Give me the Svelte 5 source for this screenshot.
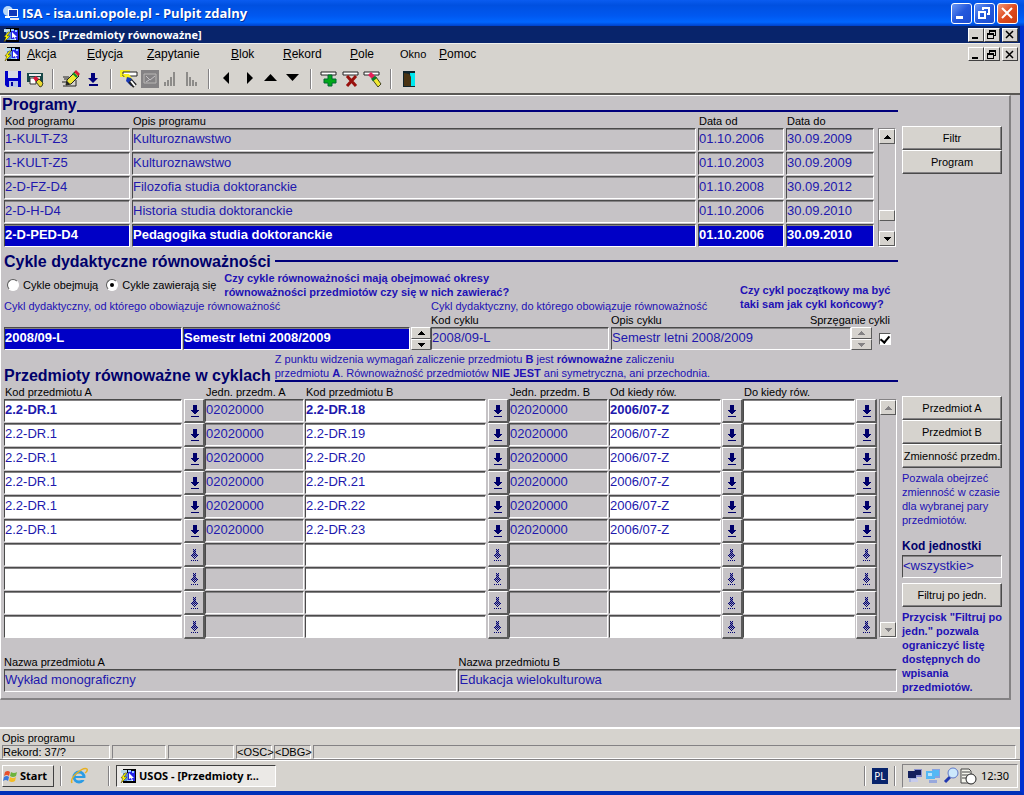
<script lang="ts">
	interface Program {
		code: string;
		name: string;
		from: string;
		to: string;
	}

	interface Pair {
		a: string;
		unitA: string;
		b: string;
		unitB: string;
		from: string;
		to: string;
	}

	const menu = [
		{ key: 'A', rest: 'kcja' },
		{ key: 'E', rest: 'dycja' },
		{ key: 'Z', rest: 'apytanie' },
		{ key: 'B', rest: 'lok' },
		{ key: 'R', rest: 'ekord' },
		{ key: 'P', rest: 'ole' },
		{ key: '', rest: 'Okno' },
		{ key: 'P', rest: 'omoc' }
	];

	const tools = [
		['save', 'print'],
		['edit', 'list'],
		['query', 'run', 'asc', 'desc'],
		['left', 'right', 'up', 'down'],
		['add', 'remove', 'clear'],
		['exit']
	];

	const programs: Program[] = [
		{ code: '1-KULT-Z3', name: 'Kulturoznawstwo', from: '01.10.2006', to: '30.09.2009' },
		{ code: '1-KULT-Z5', name: 'Kulturoznawstwo', from: '01.10.2003', to: '30.09.2009' },
		{ code: '2-D-FZ-D4', name: 'Filozofia studia doktoranckie', from: '01.10.2008', to: '30.09.2012' },
		{ code: '2-D-H-D4', name: 'Historia studia doktoranckie', from: '01.10.2006', to: '30.09.2010' },
		{ code: '2-D-PED-D4', name: 'Pedagogika studia doktoranckie', from: '01.10.2006', to: '30.09.2010' }
	];

	const emptyPair = { a: '', unitA: '', b: '', unitB: '', from: '', to: '' };

	const pairs: Pair[] = [
		...[18, 19, 20, 21, 22, 23].map((n) => ({
			a: '2.2-DR.1',
			unitA: '02020000',
			b: '2.2-DR.' + n,
			unitB: '02020000',
			from: '2006/07-Z',
			to: ''
		})),
		...[1, 2, 3, 4].map(() => ({ ...emptyPair }))
	];

	let currentProgram = $state(4);
	let currentPair = $state(0);
	let range = $state('inside');
	let linked = $state(true);
	let unit = $state('<wszystkie>');
</script>

{#snippet usosIcon()}
	<svg class="app-icon" width="16" height="16" viewBox="0 0 16 16" aria-hidden="true">
		<path d="M3 1h13v14H3z" fill="#000" />
		<path d="M1 2h6v3H1z" fill="#b8d8e8" />
		<path d="M8 3h7v10H8z" fill="#2424e8" />
		<path d="M3 5h5v8H3z" fill="#5a8cd8" />
		<path d="M8 2h3v2H8zM12 3h2v2h-2zM7 12h6v1H7z" fill="#9cf" />
		<path d="M9 5l5 5h-2l1 3h-1l-1-3-2 1z" fill="#fff" />
		<path d="M5 5L1 10h2l-2 5 6-6H4l3-4z" fill="#ff0" stroke="#430" stroke-width=".5" />
	</svg>
{/snippet}

{#snippet lovArrow(off)}
	<svg width="9" height="12" viewBox="0 0 9 12" shape-rendering="crispEdges" aria-hidden="true">
		{#if off}
			<path
				d="M3 0h1v1H3zM5 0h1v1H5zM4 1h1v1H4zM3 2h1v1H3zM5 2h1v1H5zM4 3h1v1H4zM3 4h1v1H3zM5 4h1v1H5zM2 5h1v1H2zM4 5h1v1H4zM6 5h1v1H6zM1 6h1v1H1zM3 6h1v1H3zM5 6h1v1H5zM7 6h1v1H7zM2 7h1v1H2zM4 7h1v1H4zM6 7h1v1H6zM3 8h1v1H3zM5 8h1v1H5zM4 9h1v1H4zM1 11h1v1H1zM3 11h1v1H3zM5 11h1v1H5zM7 11h1v1H7z"
				fill="#000073"
			/>
			<path d="M3 1h3v6H3zM2 6h5v1H2z" fill="#000073" opacity=".35" />
		{:else}
			<path d="M3 0h4v5h2v1H8v1H7v1H6v1H5v1H5V9H4V8H3V7H2V6H1V5h2zM1 11h8v1H1z" fill="#00006b" />
		{/if}
	</svg>
{/snippet}

{#snippet triangle(up)}
	<svg width="7" height="4" viewBox="0 0 7 4" shape-rendering="crispEdges" aria-hidden="true">
		<path d={up ? 'M3 0h1v1h1v1h1v1h1v1H0V3h1V2h1V1h1z' : 'M0 0h7v1H6v1H5v1H4v1H3V3H2V2H1V1H0z'} fill="currentColor" />
	</svg>
{/snippet}

{#snippet toolIcon(name)}
	<svg width="20" height="20" viewBox="0 0 20 20" aria-hidden="true">
		{#if name === 'save'}
			<path d="M2 2h16v16H4l-2-2z" fill="#0000c8" />
			<path d="M5 2h10v7H5z" fill="#d8dce8" />
			<path d="M6 12h9v6H6z" fill="#b8c4e8" />
			<path d="M8 13h2v4H8z" fill="#0000a0" />
		{:else if name === 'print'}
			<path d="M2 4h16v9h-3V8H5v5H2z" fill="#184848" />
			<path d="M4 5h12v2H4z" fill="#eee" />
			<path d="M5 9h6v6H5z" fill="#fff" stroke="#333" />
			<path d="M8 9l3-2 3 3-3 3z" fill="#d81838" />
			<path d="M11 13l3-3 4 4-1 3-2 1z" fill="#e8d830" stroke="#442" />
		{:else if name === 'edit'}
			<path d="M2 8h6M1 13h5M3 10h4M2 17h13v-6" stroke="#222" fill="none" />
			<path d="M5 16l1-5 8-8 4 4-8 8z" fill="#f0e830" stroke="#222" />
			<path d="M5 16l1-4 3 3z" fill="#222" />
			<path d="M13 3l2-2 4 4-2 2z" fill="#d81838" />
			<path d="M12 4l4 4" stroke="#0a8a2a" stroke-width="2" />
		{:else if name === 'list'}
			<path d="M8 4h4v5h3l-5 5-5-5h3zM6 15h9v2H6z" fill="#00007b" />
		{:else if name === 'query'}
			<path d="M1 1h10v7H1z" fill="#f8f020" />
			<path d="M4 3h14v4H4z" fill="#fff" stroke="#222" />
			<path d="M3 5h7l4 6-4 2-3-4z" fill="#f8f020" />
			<path d="M8 8l4 1 4 5-4 3-5-5z" fill="#1838b8" />
			<path d="M11 12l5 5" stroke="#222" stroke-width="5" />
			<path d="M12 12l4 5" stroke="#fff" stroke-width="2" />
		{:else if name === 'run'}
			<path d="M1 1h18v18H1z" fill="#848284" />
			<path d="M4 5h12v9H4z" fill="none" stroke="#b8b6b4" />
			<path d="M6 7l4 4 5-4M6 13l3-2" fill="none" stroke="#c6c3c6" />
		{:else if name === 'asc'}
			<path d="M4 13v4M7 11v6M10 8v9M13 3v14" stroke="#444" />
		{:else if name === 'desc'}
			<path d="M5 3v14M8 8v9M11 11v6M14 13v4" stroke="#444" />
		{:else if name === 'left'}
			<path d="M12 3v12L6 9z" fill="#000" />
		{:else if name === 'right'}
			<path d="M8 3v12l6-6z" fill="#000" />
		{:else if name === 'up'}
			<path d="M3 12h13L9.500 5z" fill="#000" />
		{:else if name === 'down'}
			<path d="M3 5h13l-6.500 7z" fill="#000" />
		{:else if name === 'add'}
			<path d="M2 3h15v3H2z" fill="#fff" stroke="#222" />
			<path d="M9 6h4v4h4v4h-4v3H9v-3H5v-4h4z" fill="#00a818" stroke="#063" />
		{:else if name === 'remove'}
			<path d="M2 3h15v3H2z" fill="#fff" stroke="#222" />
			<path d="M6 7l9 10M15 7L6 17" stroke="#98100c" stroke-width="3" />
		{:else if name === 'clear'}
			<path d="M1 3h15v3H1z" fill="#fff" stroke="#222" />
			<path d="M9 10l4-2 5 7-3 3z" fill="#f0e830" stroke="#442" />
			<path d="M5 6l3-3 4 4-3 3z" fill="#e82058" />
			<path d="M9 11l4-3" stroke="#0a7a2a" stroke-width="3" />
		{:else if name === 'exit'}
			<path d="M4 2h12v16H4z" fill="#10242c" />
			<path d="M11 4h5v13h-4z" fill="#00e8f0" />
			<path d="M5 4l5 1 2 3v9H5z" fill="#4a3414" />
		{/if}
	</svg>
{/snippet}

{#snippet windowButtons()}
	<div class="win-buttons">
		<button aria-label="_">
			<svg width="13" height="11" viewBox="0 0 13 11"><path d="M3 8h6v2H3z" /></svg>
		</button>
		<button aria-label="❐">
			<svg width="13" height="11" viewBox="0 0 13 11">
				<path d="M4 1h7v6H9V6h1V3H5v1H4zM2 4h7v6H2zM3 6v3h5V6z" fill-rule="evenodd" />
			</svg>
		</button>
		<button aria-label="×">
			<svg width="13" height="11" viewBox="0 0 13 11">
				<path d="M3 2l7 7M10 2L3 9" stroke="#000" stroke-width="1.500" />
			</svg>
		</button>
	</div>
{/snippet}

{#snippet scrollbar(off, thumb)}
	<div class="scrollbar" class:off>
		<button aria-label="▲" disabled={off}>{@render triangle(true)}</button>
		<div class="track">
			{#if thumb}<span class="thumb"></span>{/if}
		</div>
		<button aria-label="▼" disabled={off}>{@render triangle(false)}</button>
	</div>
{/snippet}

{#snippet spinner(off)}
	<div class="spinner" class:off>
		<button aria-label="▲" disabled={off}>{@render triangle(true)}</button>
		<button aria-label="▼" disabled={off}>{@render triangle(false)}</button>
	</div>
{/snippet}

<div class="window">
	<header class="remote-bar">
		<svg width="18" height="18" viewBox="0 0 18 18" aria-hidden="true">
			<circle cx="6" cy="7" r="5" fill="#b8d8f8" />
			<path d="M6 5h10v8H6z" fill="#fff" />
			<path d="M7 6h8v6H7z" fill="#1038b8" />
			<path d="M8 14h9v2H8z" fill="#e8ecf4" />
			<path d="M3 12h5v2H3z" fill="#fff" />
		</svg>
		<h1>ISA - isa.uni.opole.pl - Pulpit zdalny</h1>
		<div class="xp-buttons">
			<button aria-label="_">
				<svg width="18" height="18" viewBox="0 0 18 18"><path d="M4 12h7v3H4z" fill="#fff" /></svg>
			</button>
			<button aria-label="❐">
				<svg width="18" height="18" viewBox="0 0 18 18">
					<path d="M7 3h8v8h-3V9h1V5H9v1H7zM3 7h8v8H3zM5 9v4h4V9z" fill="#fff" fill-rule="evenodd" />
				</svg>
			</button>
			<button class="close" aria-label="×">
				<svg width="18" height="18" viewBox="0 0 18 18">
					<path d="M4 4l10 10M14 4L4 14" stroke="#fff" stroke-width="2" />
				</svg>
			</button>
		</div>
	</header>

	<div class="app-bar">
		{@render usosIcon()}
		<h2>USOS - [Przedmioty równoważne]</h2>
		{@render windowButtons()}
	</div>

	<nav class="menu-bar">
		{@render usosIcon()}
		<div class="menu">
			{#each menu as item}
				<button class:small={!item.key}><u>{item.key}</u>{item.rest}</button>
			{/each}
		</div>
		{@render windowButtons()}
	</nav>

	<div class="toolbar">
		{#each tools as group, i}
			{#if i > 0}<span class="separator"></span>{/if}
			<div class="tool-group" class:tight={i === 2}>
				{#each group as name}
					<button aria-label={name}>{@render toolIcon(name)}</button>
				{/each}
			</div>
		{/each}
	</div>

	<main class="workspace">
		<div class="panel">
			<section class="programs">
				<div class="heading">
					<h3>Programy</h3>
					<span class="rule"></span>
				</div>
				<div class="with-scroll">
					<table>
						<colgroup>
							<col class="w128" /><col /><col class="w88" /><col class="w90" />
						</colgroup>
						<thead>
							<tr>
								<th id="p-code">Kod programu</th>
								<th id="p-name">Opis programu</th>
								<th id="p-from">Data od</th>
								<th id="p-to">Data do</th>
							</tr>
						</thead>
						<tbody>
							{#each programs as program, i}
								<tr class:selected={i === currentProgram} onfocusin={() => (currentProgram = i)}>
									<td><input class="field" aria-labelledby="p-code" readonly value={program.code} /></td>
									<td><input class="field" aria-labelledby="p-name" readonly value={program.name} /></td>
									<td><input class="field" aria-labelledby="p-from" readonly value={program.from} /></td>
									<td><input class="field" aria-labelledby="p-to" readonly value={program.to} /></td>
								</tr>
							{/each}
						</tbody>
					</table>
					{@render scrollbar(false, true)}
				</div>
			</section>
			<aside class="side-programs">
				<button class="push">Filtr</button>
				<button class="push">Program</button>
			</aside>

			<section class="cycles">
				<div class="heading middle">
					<h3>Cykle dydaktyczne równoważności</h3>
					<span class="rule"></span>
				</div>
				<div class="cycle-grid">
					<div class="options">
						<label><input type="radio" value="cover" bind:group={range} />Cykle obejmują</label>
						<label><input type="radio" value="inside" bind:group={range} />Cykle zawierają się</label>
						<p class="hint strong">
							Czy cykle równoważności mają obejmować okresy<br />
							równoważności przedmiotów czy się w nich zawierać?
						</p>
					</div>
					<p class="hint strong link-hint">Czy cykl początkowy ma być<br />taki sam jak cykl końcowy?</p>
					<p class="hint" id="cycle-from">Cykl dydaktyczny, od którego obowiązuje równoważność</p>
					<p class="hint" id="cycle-to">Cykl dydaktyczny, do którego obowiązuje równoważność</p>
					<div class="cycle-start selected">
						<input class="field" aria-labelledby="cycle-from" readonly value="2008/09-L" />
						<input class="field" aria-labelledby="cycle-from" readonly value="Semestr letni 2008/2009" />
						{@render spinner(false)}
					</div>
					<div class="cycle-end">
						<label for="end-code">Kod cyklu</label>
						<label for="end-name" class="col-name">Opis cyklu</label>
						<label for="linked" class="col-link">Sprzęganie cykli</label>
						<input id="end-code" class="field" readonly value="2008/09-L" />
						<input id="end-name" class="field" readonly value="Semestr letni 2008/2009" />
						{@render spinner(true)}
						<input id="linked" type="checkbox" bind:checked={linked} />
					</div>
				</div>
			</section>

			<section class="pairs">
				<div class="pairs-head">
					<h3>Przedmioty równoważne w cyklach</h3>
					<div>
						<p class="hint">
							Z punktu widzenia wymagań zaliczenie przedmiotu <b>B</b> jest <b>równoważne</b> zaliczeniu<br />
							przedmiotu <b>A</b>. Równoważność przedmiotów <b>NIE JEST</b> ani symetryczna, ani przechodnia.
						</p>
						<span class="rule"></span>
					</div>
				</div>
				<div class="with-scroll">
					<table>
						<colgroup>
							<col class="w180" /><col class="w21" /><col class="w100" />
							<col /><col class="w21" /><col class="w100" />
							<col class="w113" /><col class="w21" /><col class="w113" /><col class="w21" />
						</colgroup>
						<thead>
							<tr>
								<th id="a" colspan="2">Kod przedmiotu A</th>
								<th id="unit-a">Jedn. przedm. A</th>
								<th id="b" colspan="2">Kod przedmiotu B</th>
								<th id="unit-b">Jedn. przedm. B</th>
								<th id="from" colspan="2">Od kiedy rów.</th>
								<th id="to" colspan="2">Do kiedy rów.</th>
							</tr>
						</thead>
						<tbody>
							{#each pairs as pair, i}
								{@const off = !pair.a}
								<tr class:current={i === currentPair} onfocusin={() => (currentPair = i)}>
									<td><input class="field edit" aria-labelledby="a" value={pair.a} /></td>
									<td class="flush"><button class="lov" aria-labelledby="a" disabled={off}>{@render lovArrow(off)}</button></td>
									<td class="tight"><input class="field" aria-labelledby="unit-a" readonly value={pair.unitA} /></td>
									<td><input class="field edit" aria-labelledby="b" value={pair.b} /></td>
									<td class="flush"><button class="lov" aria-labelledby="b" disabled={off}>{@render lovArrow(off)}</button></td>
									<td class="tight"><input class="field" aria-labelledby="unit-b" readonly value={pair.unitB} /></td>
									<td class="tight"><input class="field edit" aria-labelledby="from" value={pair.from} /></td>
									<td class="flush"><button class="lov" aria-labelledby="from" disabled={off}>{@render lovArrow(off)}</button></td>
									<td class="tight"><input class="field edit" aria-labelledby="to" value={pair.to} /></td>
									<td class="flush"><button class="lov" aria-labelledby="to" disabled={off}>{@render lovArrow(off)}</button></td>
								</tr>
							{/each}
						</tbody>
					</table>
					{@render scrollbar(true, false)}
				</div>
				<div class="names">
					<label>Nazwa przedmiotu A<input class="field" readonly value="Wykład monograficzny" /></label>
					<label>Nazwa przedmiotu B<input class="field" readonly value="Edukacja wielokulturowa" /></label>
				</div>
			</section>
			<aside class="side-pairs">
				<button class="push">Przedmiot A</button>
				<button class="push">Przedmiot B</button>
				<button class="push">Zmienność przedm.</button>
				<p class="hint">Pozwala obejrzeć<br />zmienność w czasie<br />dla wybranej pary<br />przedmiotów.</p>
				<label class="unit">Kod jednostki<input class="field" bind:value={unit} /></label>
				<button class="push">Filtruj po jedn.</button>
				<p class="hint strong">
					Przycisk "Filtruj po<br />jedn." pozwala<br />ograniczyć listę<br />dostępnych do<br />wpisania<br />przedmiotów.
				</p>
			</aside>
		</div>
	</main>

	<div class="status">
		<div>Opis programu</div>
		<div class="status-cells">
			<span>Rekord: 37/?</span>
			<span></span>
			<span></span>
			<span>&lt;OSC&gt;</span>
			<span>&lt;DBG&gt;</span>
			<span></span>
		</div>
	</div>

	<footer class="taskbar">
		<button class="start">
			<svg width="16" height="15" viewBox="0 0 16 15" aria-hidden="true">
				<path d="M2 3q3-2 5 0L6 7Q4 5 1 7z" fill="#e8502c" />
				<path d="M8 3q3 2 6 0l-1 4q-3 2-6 0z" fill="#6cb43c" />
				<path d="M1 8q3-2 5 0l-1 4q-2-2-5 0z" fill="#3c78dc" />
				<path d="M7 8q3 2 6 0l-1 4q-3 2-6 0z" fill="#f4bc24" />
			</svg>
			Start
		</button>
		<span class="grip"></span>
		<a class="ie" href="#ie" aria-label="e">
			<svg width="18" height="18" viewBox="0 0 18 18">
				<circle cx="9" cy="10" r="5" fill="none" stroke="#2c9ce4" stroke-width="3" />
				<path d="M5 10h9" stroke="#2c9ce4" stroke-width="2" />
				<path d="M11 12h6" stroke="#d6d3ce" stroke-width="2" />
				<path d="M2 16Q0 12 7 6t10-4q1 2-2 4" fill="none" stroke="#e8b020" stroke-width="1.500" />
			</svg>
		</a>
		<span class="grip"></span>
		<button class="task">
			{@render usosIcon()}
			USOS - [Przedmioty r...
		</button>
		<span class="grip push-right"></span>
		<span class="lang">PL</span>
		<span class="grip"></span>
		<div class="tray">
			<svg width="70" height="18" viewBox="0 0 70 18" aria-hidden="true">
				<path d="M2 8h8v7H2z" fill="#a8b4e0" />
				<path d="M7 2h8v8H7z" fill="#8890d0" />
				<path d="M8 3h6v5H8zM1 4h8v7H1z" fill="#14205c" />
				<path d="M4 12h7v3H4z" fill="#c8ccec" />
				<path d="M25 2h8v9h-8z" fill="#88a0e0" />
				<path d="M26 3h6v6h-6zM19 4h9v8h-9z" fill="#54b8f4" />
				<path d="M21 6h4v3h-4z" fill="#b8e4fc" />
				<path d="M22 13h8v3h-8z" fill="#98a8dc" />
				<path d="M38 15l5-5" stroke="#2038b0" stroke-width="3" />
				<circle cx="46" cy="6" r="5" fill="#cce8fc" stroke="#6078c8" />
				<path d="M54 2h8l2 2v12H54z" fill="#f4f4ec" stroke="#444" />
				<path d="M55 5h8M55 8h6M55 11h5" stroke="#444" />
				<circle cx="64" cy="12" r="5" fill="#fff" stroke="#222" />
			</svg>
			<time>12:30</time>
		</div>
	</footer>
</div>

<style>
	:global(body) {
		margin: 0;
	}

	.window {
		box-sizing: border-box;
		min-height: 100vh;
		display: flex;
		flex-direction: column;
		border-right: 4px solid #0030d0;
		border-bottom: 4px solid #0030b8;
		background: #d6d3ce;
		font: 11px/14px 'Liberation Sans', Arial, sans-serif;
		color: #000;
	}

	.window * {
		box-sizing: border-box;
	}

	h1,
	h2,
	h3,
	p {
		margin: 0;
	}

	button,
	input {
		font: inherit;
		color: inherit;
		border-radius: 0;
		margin: 0;
		padding: 0;
	}

	svg {
		display: block;
		flex: none;
	}

	/* title bars */
	.remote-bar {
		display: flex;
		align-items: center;
		height: 26px;
		padding: 0 0 0 2px;
		margin-right: -4px;
		background: linear-gradient(#0a5cf0, #0050e0 20%, #0058f0 60%, #0066ff 85%, #0040c8);
	}

	h1 {
		flex: 1;
		padding-left: 2px;
		font: bold 13px/20px 'Open Sans', sans-serif;
		color: #fff;
		text-shadow: 1px 1px 0 #0030a0;
	}

	.xp-buttons {
		display: flex;
		gap: 2px;
		padding-right: 6px;
	}

	.xp-buttons button {
		width: 21px;
		height: 21px;
		border: 1px solid #fff;
		border-radius: 3px;
		background: linear-gradient(135deg, #6c98f4, #2458dc 50%, #1c4cd0);
	}

	.xp-buttons .close {
		background: linear-gradient(135deg, #f09878, #e04c20 50%, #c83c10);
	}

	.app-bar {
		display: flex;
		align-items: center;
		height: 18px;
		padding: 0 2px 0 3px;
		background: #08246b;
		border-bottom: 1px solid #f0f0ec;
	}

	h2 {
		flex: 1;
		padding-left: 1px;
		font: bold 11px/16px 'Open Sans', sans-serif;
		color: #fff;
	}

	.win-buttons {
		display: flex;
	}

	.win-buttons button {
		width: 16px;
		height: 14px;
		background: #d6d3ce;
		border: 1px solid;
		border-color: #fff #404040 #404040 #fff;
	}

	.win-buttons button:last-child {
		margin-left: 2px;
	}

	/* menu and toolbar */
	.menu-bar {
		display: flex;
		align-items: center;
		height: 20px;
		padding: 0 2px 0 4px;
	}

	.menu {
		flex: 1;
		display: grid;
		grid-template-columns: 60px 60px 84px 52px 67px 50px 39px auto;
		align-items: center;
		padding-left: 7px;
	}

	.menu button {
		background: none;
		border: 0;
		text-align: left;
		font-size: 12px;
		line-height: 16px;
	}

	.menu .small {
		font-size: 11px;
	}

	.toolbar {
		display: flex;
		align-items: center;
		height: 31px;
		padding: 0 2px;
		border-bottom: 2px solid #5a5855;
	}

	.tool-group {
		display: flex;
	}

	.tool-group button {
		display: grid;
		place-items: center;
		width: 22px;
		height: 22px;
		background: none;
		border: 0;
	}

	.tool-group.tight button {
		width: 21px;
	}

	.separator,
	.grip {
		width: 2px;
		height: 20px;
		margin: 0 6px;
		border-left: 1px solid #848284;
		border-right: 1px solid #fff;
	}

	/* form */
	.workspace {
		flex: 1;
		padding: 0 9px 24px 0;
		background: #c6c3c6;
	}

	.panel {
		display: grid;
		grid-template-columns: 1fr 107px;
		column-gap: 4px;
		padding: 0 0 4px 3px;
		border: solid #848284;
		border-width: 1px 2px 2px 1px;
		border-top-color: #fff;
		border-left-color: #fff;
	}

	.programs,
	.cycles,
	.pairs {
		grid-column: 1;
		min-width: 0;
	}

	aside {
		grid-column: 2;
	}

	.heading {
		display: flex;
		align-items: flex-end;
		height: 18px;
	}

	h3 {
		font-size: 16px;
		line-height: 18px;
		color: #00006b;
		white-space: nowrap;
	}

	.rule {
		display: block;
		flex: 1;
		height: 2px;
		margin-bottom: 2px;
		background: #00007b;
	}

	.middle {
		align-items: center;
		gap: 4px;
	}

	.with-scroll {
		display: flex;
		gap: 2px;
	}

	table {
		flex: 1;
		width: 0;
		table-layout: fixed;
		border-collapse: collapse;
	}

	th {
		height: 14px;
		padding: 0 0 0 1px;
		font-weight: normal;
		text-align: left;
		white-space: nowrap;
	}

	td {
		height: 24px;
		padding: 0 2px 1px 0;
	}

	td.tight {
		padding-right: 1px;
	}

	td.flush {
		padding: 0;
	}

	.w21 {
		width: 21px;
	}

	.w88 {
		width: 88px;
	}

	.w90 {
		width: 90px;
	}

	.w100 {
		width: 100px;
	}

	.w113 {
		width: 113px;
	}

	.w128 {
		width: 128px;
	}

	.w180 {
		width: 180px;
	}

	.field {
		display: block;
		width: 100%;
		min-width: 0;
		height: 23px;
		padding: 0 0 2px;
		font-size: 13px;
		line-height: 18px;
		color: #2118ad;
		background: #c6c3c6;
		border: 1px solid;
		border-color: #4a4a4a #fff #fff #4a4a4a;
		outline: 0;
		box-shadow: inset 0 1px #848284;
	}

	.field.edit {
		background: #fff;
	}

	.selected .field {
		background: #0000c6;
		color: #fff;
		font-weight: bold;
	}

	.current .edit {
		font-weight: bold;
	}

	.scrollbar {
		display: flex;
		flex-direction: column;
		width: 18px;
		margin: 14px 0 1px;
		background: #c6c3c6;
		border: 1px solid;
		border-color: #848284 #fff #fff #848284;
	}

	.scrollbar button,
	.spinner button {
		display: grid;
		place-items: center;
		background: #d6d3ce;
		border: 1px solid;
		border-color: #fff #5a5a5a #5a5a5a #fff;
	}

	.scrollbar button {
		height: 15px;
	}

	.off button {
		color: #848284;
	}

	.track {
		flex: 1;
		display: flex;
		flex-direction: column;
		justify-content: flex-end;
		padding-bottom: 10px;
	}

	.thumb {
		height: 11px;
		background: #d6d3ce;
		border: 1px solid;
		border-color: #fff #5a5a5a #5a5a5a #fff;
	}

	.programs {
		padding-right: 2px;
	}

	.programs .heading {
		margin: 0 -2px;
	}

	.hint {
		color: #2110b5;
		white-space: nowrap;
	}

	.strong {
		font-weight: bold;
	}

	.push {
		display: block;
		width: 100px;
		height: 24px;
		background: #d6d3ce;
		border: 1px solid;
		border-color: #fff #4a4a4a #4a4a4a #fff;
		box-shadow: inset -1px -1px #848284;
		white-space: nowrap;
	}

	.side-programs {
		padding-top: 30px;
	}

	.cycles {
		padding-top: 5px;
	}

	.cycle-grid {
		display: grid;
		grid-template-columns: 427fr 309fr 158px;
		grid-template-rows: 28px 14px 37px;
	}

	.options {
		grid-column: 1 / 3;
		display: flex;
		align-items: center;
		gap: 8px;
		padding-left: 3px;
	}

	.options label {
		display: flex;
		align-items: center;
		gap: 4px;
		white-space: nowrap;
	}

	.link-hint {
		grid-column: 3;
		grid-row: 1 / 3;
		align-self: end;
		padding-bottom: 2px;
	}

	input[type='radio'],
	input[type='checkbox'] {
		appearance: none;
		display: grid;
		place-items: center;
		width: 12px;
		height: 12px;
		background: #fff;
		border: 1px solid;
		border-color: #5a5a5a #fff #fff #5a5a5a;
	}

	input[type='radio'] {
		border-radius: 50%;
	}

	input[type='radio']:checked::before {
		content: '';
		width: 4px;
		height: 4px;
		border-radius: 50%;
		background: #000;
	}

	input[type='checkbox']:checked::before {
		content: '';
		width: 4px;
		height: 7px;
		margin-bottom: 2px;
		border: solid #000;
		border-width: 0 2px 2px 0;
		transform: rotate(40deg);
	}

	.cycle-start {
		display: grid;
		grid-template-columns: 178px 1fr 20px;
		column-gap: 1px;
		align-items: end;
	}

	.cycle-end {
		grid-column: 2 / 4;
		display: grid;
		grid-template-columns: 180px 1fr 21px 26px;
		grid-template-rows: 14px 23px;
	}

	.cycle-end .col-name {
		grid-area: 1 / 2;
	}

	.cycle-end .col-link {
		grid-area: 1 / 2 / 2 / 5;
		justify-self: end;
		padding-right: 8px;
	}

	.cycle-end input[type='checkbox'] {
		place-self: center;
	}

	#end-code {
		width: 178px;
	}

	.spinner {
		display: grid;
		grid-template-rows: 12px 11px;
		height: 23px;
	}

	.pairs {
		padding: 2px 1px 0 0;
	}

	.pairs-head {
		display: grid;
		grid-template-columns: auto 1fr;
		gap: 4px;
		align-items: end;
		height: 33px;
		margin-right: -1px;
	}

	.pairs-head .rule {
		margin-bottom: 3px;
	}

	.names {
		display: grid;
		grid-template-columns: 454fr 439fr;
		column-gap: 1px;
		padding-top: 16px;
	}

	.lov {
		display: grid;
		place-items: center;
		width: 21px;
		height: 24px;
		background: #c6c3c6;
		border: solid #5a5a5a;
		border-width: 1px 2px 2px 1px;
		border-top-color: #fff;
		border-left-color: #fff;
	}

	.side-pairs {
		padding-top: 46px;
	}

	.side-pairs .hint {
		padding: 3px 0 0;
	}

	.unit {
		display: block;
		padding: 11px 0 5px;
		font-size: 12px;
		line-height: 17px;
		font-weight: bold;
		color: #00006b;
	}

	.unit .field {
		width: 100px;
		font-weight: normal;
	}

	/* status line and taskbar */
	.status {
		height: 33px;
		padding: 2px 4px 0 2px;
		border-top: 2px solid #fff;
		border-bottom: 1px solid #848284;
	}

	.status-cells {
		display: grid;
		grid-template-columns: 108px 54px 66px 36px 37px 1fr;
		column-gap: 2px;
	}

	.status-cells span {
		height: 14px;
		line-height: 13px;
		border: 1px solid;
		border-color: #848284 #fff #fff #848284;
	}

	.taskbar {
		display: flex;
		align-items: center;
		height: 31px;
		padding: 0 2px;
		border-top: 1px solid #fff;
		font: 11px/16px 'Noto Sans', sans-serif;
	}

	.start,
	.task {
		display: flex;
		align-items: center;
		height: 22px;
		font-weight: bold;
		border: 1px solid;
		border-color: #fff #404040 #404040 #fff;
		background: #d6d3ce;
		white-space: nowrap;
	}

	.start {
		width: 52px;
		gap: 1px;
	}

	.ie {
		margin: 0 14px 0 2px;
	}

	.task {
		width: 160px;
		gap: 3px;
		padding-left: 3px;
		border-color: #404040 #fff #fff #404040;
		background: #ebe9e6;
	}

	.push-right {
		margin-left: auto;
	}

	.lang {
		width: 16px;
		background: #08246b;
		color: #fff;
		font-size: 10px;
		text-align: center;
	}

	.tray {
		display: flex;
		align-items: center;
		gap: 4px;
		height: 24px;
		padding: 0 8px 0 4px;
		border: 1px solid;
		border-color: #848284 #fff #fff #848284;
	}
</style>
